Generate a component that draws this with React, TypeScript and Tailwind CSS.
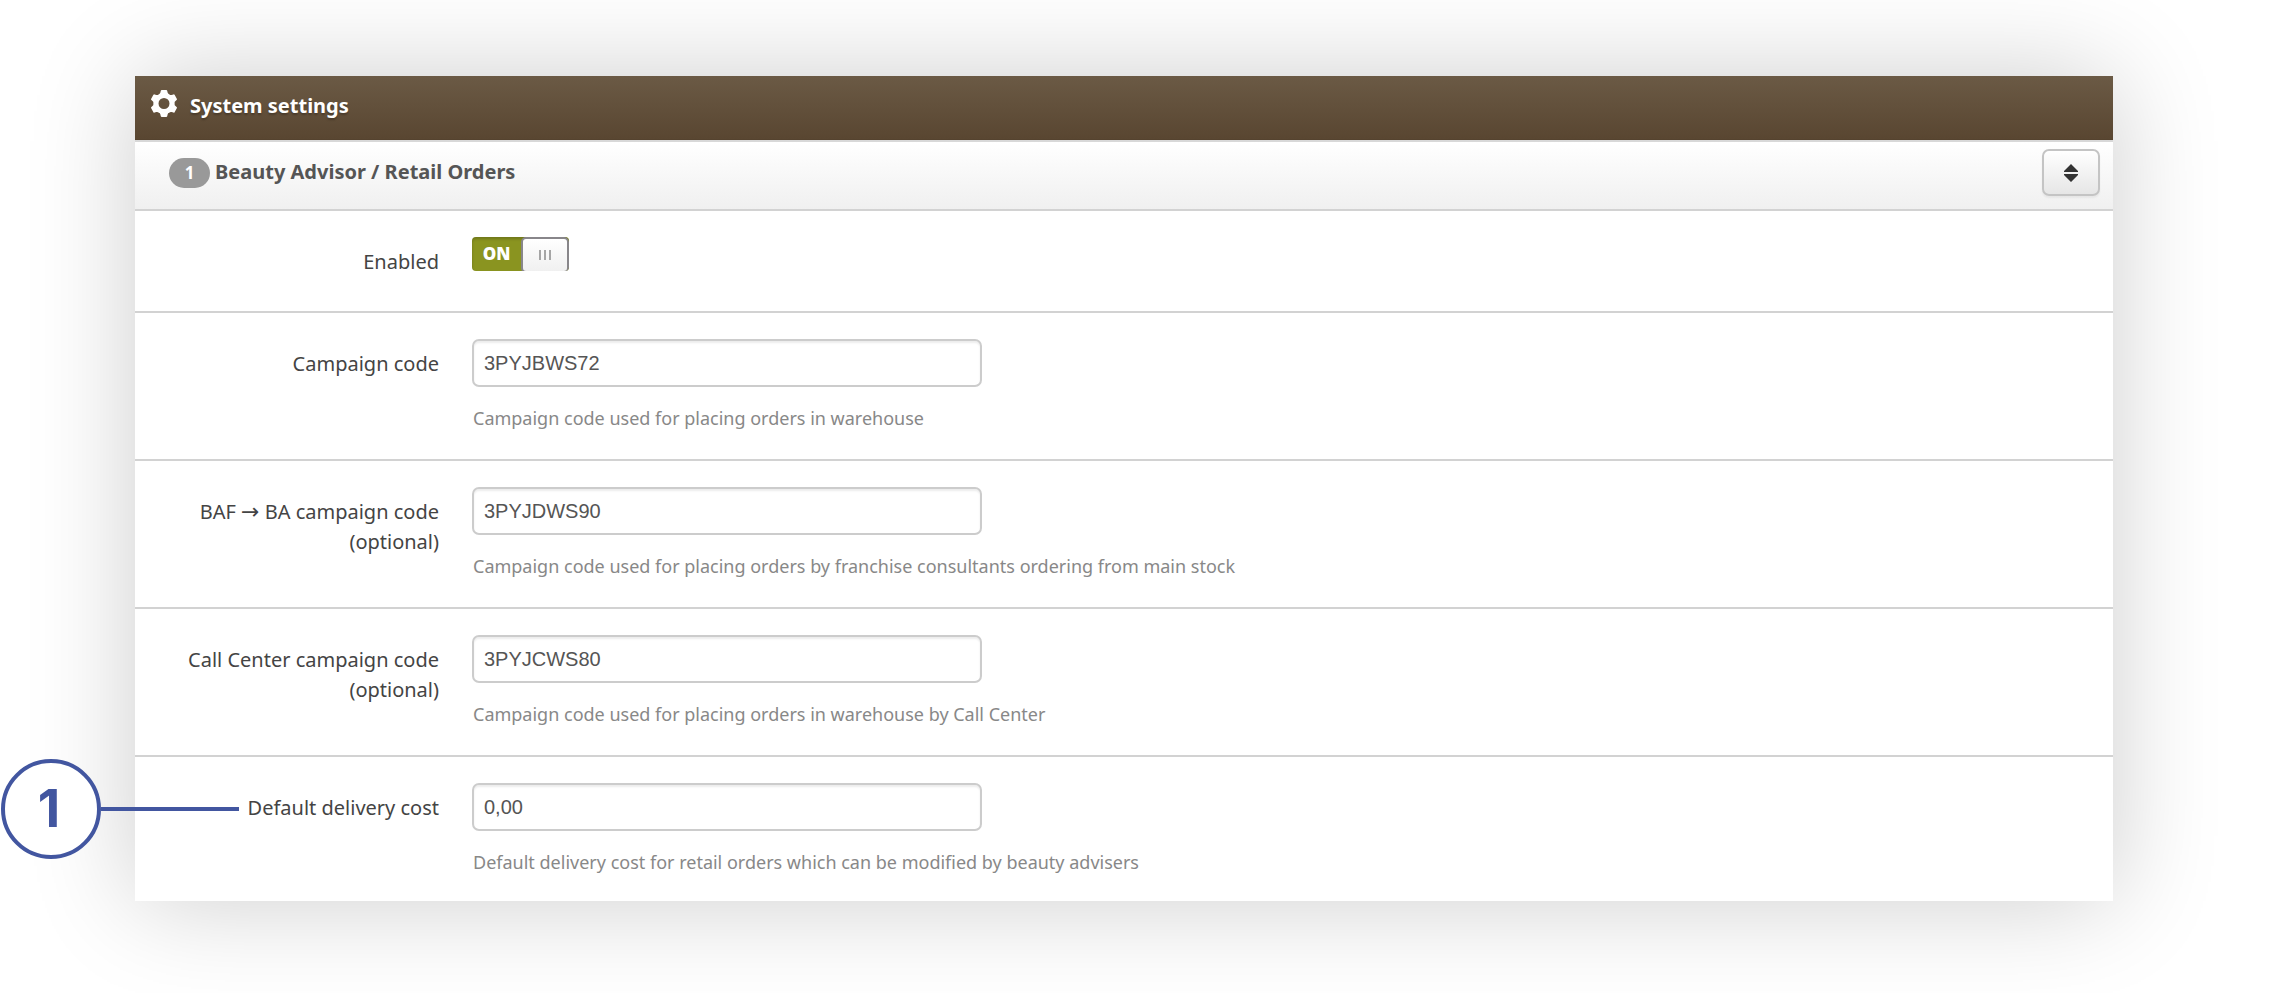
import { useState, type ReactNode } from "react";

type Field = {
  id: string;
  label: ReactNode;
  value: string;
  help: string;
  marker?: string;
};

const fields: Field[] = [
  {
    id: "campaign-code",
    label: "Campaign code",
    value: "3PYJBWS72",
    help: "Campaign code used for placing orders in warehouse",
  },
  {
    id: "baf-campaign-code",
    label: (
      <>
        BAF <span className="font-['DejaVu_Sans',sans-serif] text-[22px] leading-none">→</span> BA campaign code
        (optional)
      </>
    ),
    value: "3PYJDWS90",
    help: "Campaign code used for placing orders by franchise consultants ordering from main stock",
  },
  {
    id: "call-center-campaign-code",
    label: "Call Center campaign code (optional)",
    value: "3PYJCWS80",
    help: "Campaign code used for placing orders in warehouse by Call Center",
  },
  {
    id: "default-delivery-cost",
    label: "Default delivery cost",
    value: "0,00",
    help: "Default delivery cost for retail orders which can be modified by beauty advisers",
    marker: "1",
  },
];

const teeth = [0, 60, 120, 180, 240, 300];

function GearIcon() {
  return (
    <svg viewBox="0 0 26 27" className="mb-1 h-[27px] w-[26px]" fill="#fff" aria-hidden="true">
      <circle cx="13" cy="13.5" r="8" fill="none" stroke="#fff" strokeWidth="5" />
      {teeth.map((angle) => (
        <path
          key={angle}
          d="M10.800 0h4.400q.8 0 1 .8l.4 1.800q.2 1.200 1.600 1.900L16 7h-6L7.800 4.500q1.400-.7 1.600-1.900l.4-1.800q.2-.8 1-.8z"
          transform={`rotate(${angle} 13 13.5)`}
        />
      ))}
    </svg>
  );
}

function SortIcon() {
  return (
    <svg viewBox="0 0 14 18" className="h-[18px] w-[14px]" fill="#333" aria-hidden="true">
      <path d="M7 0l7 7v1H0V7zM0 10h14v1l-7 7-7-7z" />
    </svg>
  );
}

function Toggle() {
  const [on, setOn] = useState(true);

  return (
    <button
      id="enabled"
      type="button"
      role="switch"
      aria-checked={on}
      onClick={() => setOn(!on)}
      className="flex h-[34px] w-[97px] overflow-hidden rounded-[4px] bg-[#8a9420] shadow-[inset_0_2px_3px_rgba(0,0,0,0.2)]"
    >
      <span className="flex-1 text-center font-['Open_Sans',sans-serif] text-[17px] leading-[33px] font-extrabold text-white">
        {on ? "ON" : "OFF"}
      </span>
      <span className="flex h-9 w-[48px] items-center justify-center gap-[3px] rounded-[5px] border-2 border-[#88868a] bg-linear-to-b from-white to-[#f0f0f0]">
        <span className="h-[10px] w-[2px] bg-[#a5a5a5]" />
        <span className="h-[10px] w-[2px] bg-[#a5a5a5]" />
        <span className="h-[10px] w-[2px] bg-[#a5a5a5]" />
      </span>
    </button>
  );
}

function Marker({ text }: { text: string }) {
  return (
    <div className="absolute top-0.5 left-[-134px] flex items-center">
      <span className="flex size-[100px] items-center justify-center rounded-full border-4 border-[#4256a0] bg-white pr-1 font-[Inter,sans-serif] text-[52px] leading-none font-bold text-[#4256a0]">
        {text}
      </span>
      <span className="h-1 w-[138px] bg-[#4256a0]" />
    </div>
  );
}

function FieldRow({ field }: { field: Field }) {
  return (
    <div className="relative flex min-h-[148px] gap-[33px] border-t-2 border-[#d2d2d2] pt-[26px] last:min-h-[146px]">
      {field.marker && <Marker text={field.marker} />}
      <label htmlFor={field.id} className="w-[304px] pt-[10px] pl-12 text-right text-[20px] leading-[30px]">
        {field.label}
      </label>
      <div className="flex-1">
        <input
          id={field.id}
          type="text"
          defaultValue={field.value}
          className="block h-12 w-[510px] rounded-[7px] border-2 border-[#ccc] bg-white px-[10px] font-['Liberation_Sans',sans-serif] text-[20px] text-[#555] shadow-[inset_0_2px_2px_rgba(0,0,0,0.075)]"
        />
        <p className="mt-4 pl-px text-[18px] leading-[30px] text-[#888]">{field.help}</p>
      </div>
    </div>
  );
}

export default function App() {
  return (
    <main className="overflow-hidden bg-white pt-[76px] pr-[157px] pb-[92px] pl-[135px] font-['Noto_Sans','Open_Sans',sans-serif] text-[#444]">
      <section className="bg-white shadow-[0_0_100px_rgba(0,0,0,0.2)]">
        <header className="flex h-16 items-center gap-[13px] border-b border-[#55432f] bg-linear-to-b from-[#6b5a45] to-[#594631] pb-1 pl-4 text-white">
          <GearIcon />
          <h1 className="text-[20px] font-bold [text-shadow:0_2px_2px_rgba(0,0,0,0.25)]">System settings</h1>
        </header>

        <div className="flex h-[69px] items-center border-t-2 border-[#d8d8d8] bg-linear-to-b from-white to-[#f0f0f0] pr-[13px] pb-1.5 pl-[34px]">
          <span className="h-[30px] w-[41px] rounded-full bg-[#999] text-center text-[17px] leading-[30px] font-bold text-white">
            1
          </span>
          <h2 className="ml-[5px] flex-1 pb-0.5 text-[20px] font-bold text-[#555]">
            Beauty Advisor / Retail Orders
          </h2>
          <button
            type="button"
            aria-label="Reorder"
            className="flex h-[47px] w-[58px] items-center justify-center rounded-[7px] border-2 border-[#c4c4c4] bg-linear-to-b from-white to-[#e6e6e6] shadow-[0_2px_2px_rgba(0,0,0,0.05)]"
          >
            <SortIcon />
          </button>
        </div>

        <form>
          <div className="flex h-[102px] gap-[33px] border-t-2 border-[#d2d2d2] pt-[26px]">
            <label htmlFor="enabled" className="w-[304px] pt-[10px] text-right text-[20px] leading-[30px]">
              Enabled
            </label>
            <Toggle />
          </div>
          {fields.map((field) => (
            <FieldRow key={field.id} field={field} />
          ))}
        </form>
      </section>
    </main>
  );
}
